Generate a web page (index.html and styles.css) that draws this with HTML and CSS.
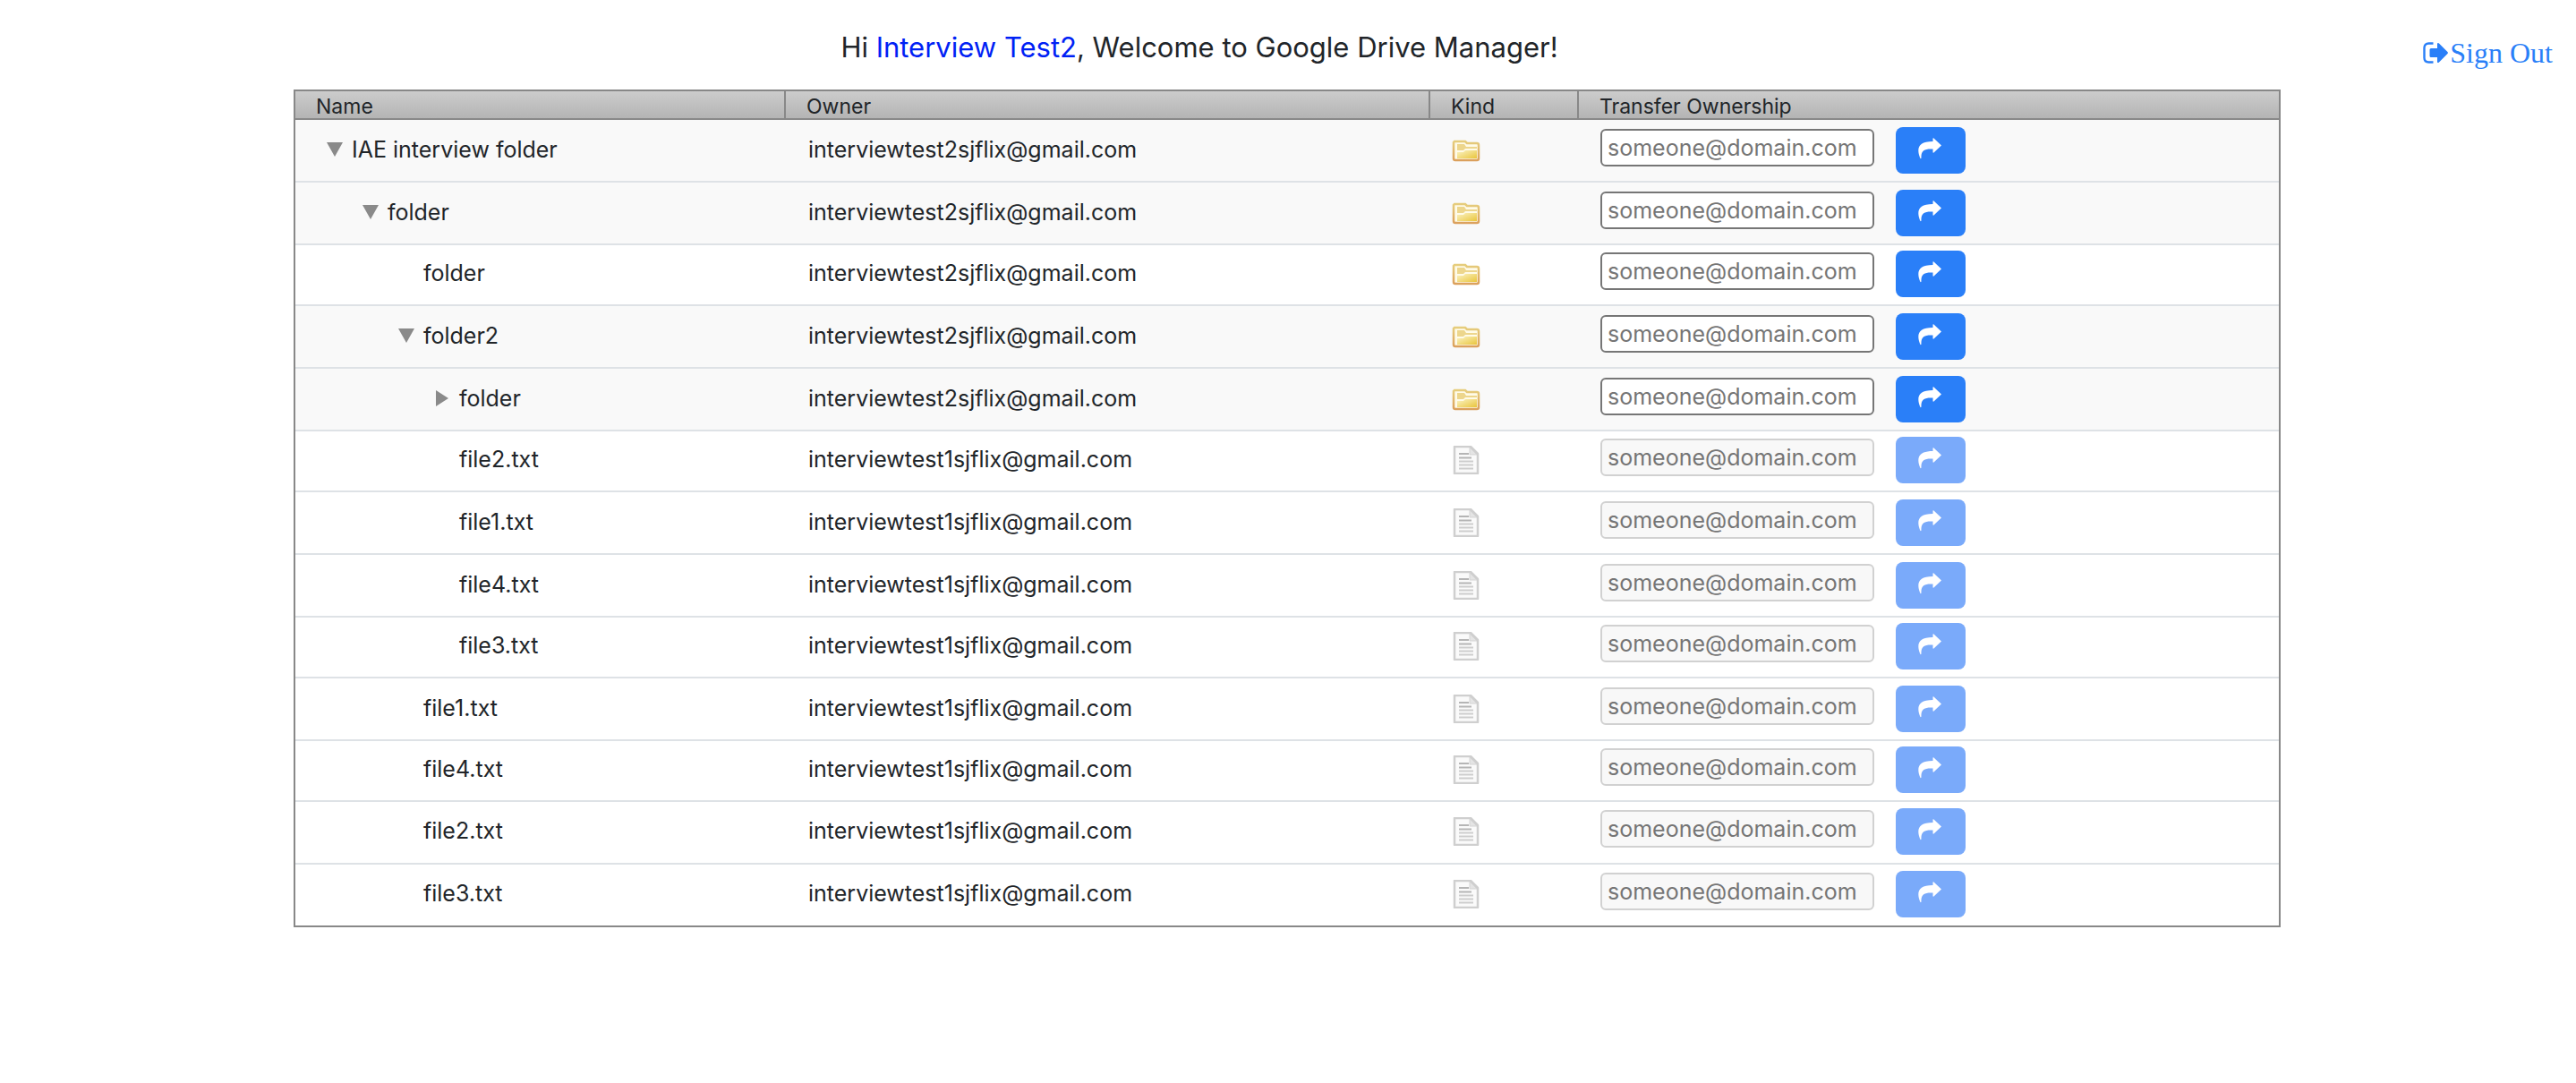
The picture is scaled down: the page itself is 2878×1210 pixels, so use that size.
FILE: index.html
```html
<!DOCTYPE html>
<html lang="en">
<head>
<meta charset="utf-8">
<title>Google Drive Manager</title>
<link rel="stylesheet" href="styles.css">
</head>
<body>
<svg class="sprites" aria-hidden="true">
  <defs>
    <linearGradient id="folder-fill" x1="0" y1="0" x2="1" y2="1"><stop offset="0" stop-color="#fbf3c4"/><stop offset="1" stop-color="#e9c53c"/></linearGradient>
    <linearGradient id="folder-edge" x1="0" y1="0" x2="0" y2="1"><stop offset="0" stop-color="#e6cd7c"/><stop offset="1" stop-color="#dba05c"/></linearGradient>
    <symbol id="folder" viewBox="0 0 32 32">
      <path d="M3 6h12l2 2h11q2 0 2 2v15q0 2-2 2H4q-2 0-2-2V7z" fill="#fffbe8" stroke="url(#folder-edge)" stroke-width="2.500"/>
      <path d="M6 9h8l2 3h12v2H15l-2 2H6z" fill="#edd68c"/>
      <path d="M6 18h7l2-2h13v9H6z" fill="url(#folder-fill)"/>
    </symbol>
    <symbol id="file" viewBox="0 0 32 32">
      <path d="M3 1h18l8 8v22H3z" fill="#fafafa" stroke="#cfcfcf" stroke-width="2.500" stroke-linejoin="round"/>
      <path d="M20 2v8h8z" fill="#e4e4e4" stroke="#d4d4d4"/>
      <path d="M8 9h11M8 13.500h14" stroke="#b5b5b5" stroke-width="2"/>
      <path d="M8 17.500h16M8 21.500h16M8 25.500h16" stroke="#cdcdcd" stroke-width="2"/>
    </symbol>
    <symbol id="share" viewBox="0 0 26 24">
      <path d="M16.500 0.500Q17 0 17.500 0.500L26 8.500L17.500 16.500Q16.500 17 16.500 16V12.500C8 12 3 13.500 3.500 22.500Q3 24 2.200 22.500C-2 12 0 4 16.500 4z" fill="currentColor"/>
    </symbol>
    <symbol id="down" viewBox="0 0 18 16"><path d="M0 0h18L9 16z" fill="#8a8a8a"/></symbol>
    <symbol id="right" viewBox="0 0 14 18"><path d="M0 0v18l14-9z" fill="#8a8a8a"/></symbol>
  </defs>
</svg>

<header class="top">
  <h1 class="greeting">Hi <span class="user">Interview Test2</span>, Welcome to Google Drive Manager!</h1>
  <a class="signout" href="#"><svg class="signout-icon" viewBox="0 0 28 24" aria-hidden="true"><path d="M11.500 1.500H6.500Q1.500 1.500 1.500 6.500v11q0 5 5 5h5" fill="none" stroke="currentColor" stroke-width="2.400"/><path d="M16 1.500Q17 0.500 18 1.500L27.500 11Q28.300 12 27.500 13L18 22.500Q17 23.500 16 22.500V17H9Q7.500 17 7.500 15.500V8.500Q7.500 7 9 7h7z" fill="currentColor"/></svg>Sign Out</a>
</header>

<table class="tree">
  <colgroup><col class="c-name"><col class="c-owner"><col class="c-kind"><col></colgroup>
  <thead><tr><th>Name</th><th>Owner</th><th>Kind</th><th>Transfer Ownership</th></tr></thead>
  <tbody id="rows"></tbody>
</table>
<script src="tree.js"></script>
</body>
</html>
```
FILE: styles.css
```css
* { box-sizing: border-box; }

body {
  margin: 0;
  background: #fff;
  color: #212529;
  font-family: Inter, "Liberation Sans", sans-serif;
  font-size: 25px;
}

.sprites { position: absolute; width: 0; height: 0; }

.top {
  display: grid;
  grid-template-columns: 1fr auto 1fr;
  height: 100px;
}

.greeting {
  grid-column: 2;
  margin: 34px 198px 0 0;
  font-size: 31px;
  line-height: 38px;
  font-weight: 400;
}

.user { color: #0021f5; }

.signout {
  display: flex;
  align-items: center;
  gap: 2px;
  justify-self: end;
  align-self: start;
  margin: 39px 26px 0 0;
  color: #2a7ff8;
  font-family: "Liberation Serif", serif;
  font-size: 32px;
  line-height: 40px;
  text-decoration: none;
}

.signout-icon { flex: none; width: 28px; height: 24px; }

.tree {
  width: calc(100% - 658px);
  margin: 0 330px 0 328px;
  border: 2px solid #888;
  border-collapse: separate;
  border-spacing: 0;
  table-layout: fixed;
}

.c-name { width: 548px; }
.c-owner { width: 720px; }
.c-kind { width: 166px; }

th {
  height: 32px;
  padding: 4px 23px 0;
  border-right: 2px solid #888;
  border-bottom: 2px solid #888;
  background: linear-gradient(#ccc, #b4b4b4);
  font-size: 23px;
  line-height: 26px;
  font-weight: 400;
  text-align: left;
}

th:last-child { border-right: 0; }

td {
  height: 70px;
  padding: 0 24px;
  border-bottom: 2px solid #dee2e6;
  line-height: 30px;
  vertical-align: middle;
}

tr:nth-child(3n) td, tr:nth-child(11) td { height: 68px; padding-bottom: 2px; }
tr:nth-child(12) td { height: 70px; }
tr:last-child td { height: 68px; padding-bottom: 2px; border-bottom: 0; }
.branch { background: #f9f9f9; }

.name, .owner { display: flex; align-items: center; padding-bottom: 2px; }
.owner { padding-left: 1px; }
.level-1 { padding-left: 40px; }
.level-2 { padding-left: 80px; }
.level-3 { padding-left: 120px; }

.toggle {
  display: flex;
  align-items: center;
  justify-content: center;
  width: 39px;
  height: 30px;
  padding: 0;
  border: 0;
  background: none;
}

.down { width: 18px; height: 16px; }
.right { width: 14px; height: 18px; }
.kind { display: block; width: 32px; height: 32px; }

.transfer { display: flex; align-items: center; gap: 24px; }

.email {
  width: 306px;
  height: 42px;
  margin: 0 0 6px;
  padding: 0 6px;
  border: 2px solid #767676;
  border-radius: 6px;
  background: #fff;
  font: inherit;
}

.email::placeholder { color: #757575; opacity: 1; }
.email:disabled { border-color: #d1d1d1; background: #f8f8f8; }

.send {
  display: flex;
  align-items: center;
  justify-content: center;
  width: 78px;
  height: 52px;
  padding: 0 2px 4px 0;
  border: 0;
  border-radius: 8px;
  background: #2a7ff8;
  color: #fff;
}

.send:disabled { background: #7aaafa; }
.share { width: 26px; height: 24px; }
```
FILE: tree.js
```js
const rows = [
  ["IAE interview folder", 0, "down"],
  ["folder", 1, "down"],
  ["folder", 2, ""],
  ["folder2", 2, "down"],
  ["folder", 3, "right"],
  ["file2.txt", 3],
  ["file1.txt", 3],
  ["file4.txt", 3],
  ["file3.txt", 3],
  ["file1.txt", 2],
  ["file4.txt", 2],
  ["file2.txt", 2],
  ["file3.txt", 2]
];

document.getElementById("rows").innerHTML = rows.map(([name, level, arrow]) => {
  const isFolder = arrow !== undefined;
  const owner = isFolder ? "interviewtest2sjflix@gmail.com" : "interviewtest1sjflix@gmail.com";
  const disabled = isFolder ? "" : "disabled";
  const toggle = arrow
    ? `<button class="toggle" aria-label="Toggle ${name}"><svg class="${arrow}"><use href="#${arrow}"/></svg></button>`
    : `<span class="toggle"></span>`;
  return `<tr class="${arrow ? "branch" : ""}">
    <td><div class="name level-${level}">${toggle}${name}</div></td>
    <td><div class="owner">${owner}</div></td>
    <td><svg class="kind"><use href="#${isFolder ? "folder" : "file"}"/></svg></td>
    <td><div class="transfer">
      <input class="email" type="email" aria-label="New owner of ${name}" placeholder="someone@domain.com" ${disabled}>
      <button class="send" aria-label="Transfer ${name}" ${disabled}><svg class="share"><use href="#share"/></svg></button>
    </div></td>
  </tr>`;
}).join("");
```
